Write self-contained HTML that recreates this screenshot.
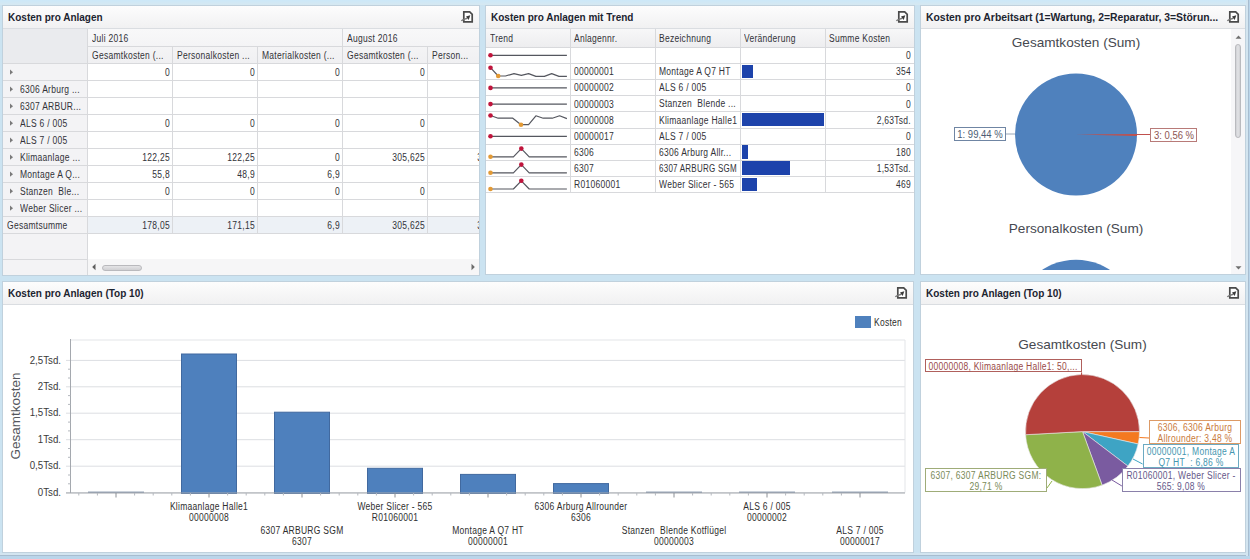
<!DOCTYPE html>
<html><head><meta charset="utf-8">
<style>
*{margin:0;padding:0;box-sizing:border-box}
html,body{width:1250px;height:559px;overflow:hidden}
body{position:relative;background:#cbe3f1;font-family:"Liberation Sans",sans-serif;font-size:10px;color:#323238}
.a{position:absolute}
.panel{position:absolute;background:#fff;overflow:hidden}
.frame{position:absolute;left:0;top:0;right:0;bottom:0;border:1px solid #c0d1dd;pointer-events:none}
.hdr{position:absolute;left:0;top:0;right:0;height:24px;background:linear-gradient(#fdfdfd,#f1f1f2);border-bottom:1px solid #dadde1}
.title{position:absolute;left:6px;top:6.5px;font-size:10px;font-weight:bold;color:#1c2430;line-height:12px;white-space:nowrap}
.ico{position:absolute;top:5px;width:14px;height:14px}
.t{position:absolute;white-space:nowrap}
svg{position:absolute;overflow:visible}
</style></head><body>
<div class="a" style="left:0;top:0;width:1250px;height:5px;background:linear-gradient(#cce8f8,#d6e8f1)"></div>
<div class="a" style="left:0;top:553px;width:1250px;height:6px;background:#bad5ea"></div>
<div class="a" style="left:0;top:553px;width:1249px;height:3px;background:#d3e5f0;border-bottom:1px solid #a8bdd0"></div>
<div class="a" style="left:1246px;top:0;width:4px;height:559px;background:#bad5ea"></div>
<div class="a" style="left:1246px;top:0;width:3px;height:556px;background:#d3e5f0;border-right:1px solid #a8bdd0"></div>

<div class="panel" id="p1" style="left:2px;top:5px;width:478px;height:271px">
<div class="hdr"><div class="title" style="">Kosten pro Anlagen</div><svg class="ico" style="left:458px" viewBox="0 0 14 14"><path d="M3.8 1.8H9.7L12.2 4.3V11.9H3.8Z" fill="#fff" stroke="#4a4a4a" stroke-width="1.7" stroke-linejoin="miter"/><path d="M1.3 10.8C2.8 9.6 4.5 8.9 7.4 8.2" fill="none" stroke="#777" stroke-width="1.4"/><path d="M10.3 5.2L6.0 6.6L8.7 9.9Z" fill="#3a3a3a"/></svg></div>
<div class="a" style="left:1px;top:24px;width:84px;height:34px;background:#eaebee"></div>
<div class="a" style="left:85px;top:24px;width:500px;height:34px;background:linear-gradient(#f8f8f9,#f0f0f2)"></div>
<div class="a" style="left:85px;top:41px;width:500px;height:1px;background:#d8d9dc"></div>
<div class="a" style="left:1px;top:58px;width:600px;height:1px;background:#d8d9dc"></div>
<div class="a" style="left:340px;top:24px;width:1px;height:17px;background:#d8d9dc"></div>
<div class="a" style="left:170px;top:41px;width:1px;height:17px;background:#d8d9dc"></div>
<div class="a" style="left:255px;top:41px;width:1px;height:17px;background:#d8d9dc"></div>
<div class="a" style="left:340px;top:41px;width:1px;height:17px;background:#d8d9dc"></div>
<div class="a" style="left:425px;top:41px;width:1px;height:17px;background:#d8d9dc"></div>
<div class="t" style="top:26.83px;font-size:10px;line-height:13px;letter-spacing:0.32px;left:90.00px;transform:scaleX(0.85);transform-origin:0 50%;">Juli 2016</div>
<div class="t" style="top:26.83px;font-size:10px;line-height:13px;letter-spacing:0.32px;left:345.00px;transform:scaleX(0.85);transform-origin:0 50%;">August 2016</div>
<div class="t" style="top:43.83px;font-size:10px;line-height:13px;letter-spacing:0.32px;left:89.50px;transform:scaleX(0.85);transform-origin:0 50%;">Gesamtkosten (...</div>
<div class="t" style="top:43.83px;font-size:10px;line-height:13px;letter-spacing:0.32px;left:174.50px;transform:scaleX(0.85);transform-origin:0 50%;">Personalkosten ...</div>
<div class="t" style="top:43.83px;font-size:10px;line-height:13px;letter-spacing:0.32px;left:259.50px;transform:scaleX(0.85);transform-origin:0 50%;">Materialkosten (...</div>
<div class="t" style="top:43.83px;font-size:10px;line-height:13px;letter-spacing:0.32px;left:344.50px;transform:scaleX(0.85);transform-origin:0 50%;">Gesamtkosten (...</div>
<div class="t" style="top:43.83px;font-size:10px;line-height:13px;letter-spacing:0.32px;left:429.50px;transform:scaleX(0.85);transform-origin:0 50%;">Person...</div>
<div class="a" style="left:1px;top:59px;width:84px;height:196px;background:#f3f3f5"></div>
<div class="a" style="left:85px;top:24px;width:1px;height:247px;background:#d8d9dc"></div>
<div class="a" style="left:1px;top:75px;width:600px;height:1px;background:#d8d9dc"></div>
<svg style="left:6.5px;top:64px" width="5" height="7"><path d="M1 0.6L4 3.2L1 5.8Z" fill="#7a7a7a"/></svg>
<div class="t" style="top:61.33px;font-size:10px;line-height:13px;letter-spacing:0.32px;left:18.00px;transform:scaleX(0.85);transform-origin:0 50%;"></div>
<div class="t" style="top:61.33px;font-size:10px;line-height:13px;letter-spacing:0.32px;left:-132.30px;width:300px;text-align:right;transform:scaleX(0.85);transform-origin:100% 50%;">0</div>
<div class="t" style="top:61.33px;font-size:10px;line-height:13px;letter-spacing:0.32px;left:-47.30px;width:300px;text-align:right;transform:scaleX(0.85);transform-origin:100% 50%;">0</div>
<div class="t" style="top:61.33px;font-size:10px;line-height:13px;letter-spacing:0.32px;left:37.70px;width:300px;text-align:right;transform:scaleX(0.85);transform-origin:100% 50%;">0</div>
<div class="t" style="top:61.33px;font-size:10px;line-height:13px;letter-spacing:0.32px;left:122.70px;width:300px;text-align:right;transform:scaleX(0.85);transform-origin:100% 50%;">0</div>
<div class="a" style="left:170px;top:58px;width:1px;height:17px;background:#d8d9dc"></div>
<div class="a" style="left:255px;top:58px;width:1px;height:17px;background:#d8d9dc"></div>
<div class="a" style="left:340px;top:58px;width:1px;height:17px;background:#d8d9dc"></div>
<div class="a" style="left:425px;top:58px;width:1px;height:17px;background:#d8d9dc"></div>
<div class="a" style="left:1px;top:92px;width:600px;height:1px;background:#d8d9dc"></div>
<svg style="left:6.5px;top:81px" width="5" height="7"><path d="M1 0.6L4 3.2L1 5.8Z" fill="#7a7a7a"/></svg>
<div class="t" style="top:78.33px;font-size:10px;line-height:13px;letter-spacing:0.32px;left:18.00px;transform:scaleX(0.85);transform-origin:0 50%;">6306 Arburg ...</div>
<div class="a" style="left:170px;top:75px;width:1px;height:17px;background:#d8d9dc"></div>
<div class="a" style="left:255px;top:75px;width:1px;height:17px;background:#d8d9dc"></div>
<div class="a" style="left:340px;top:75px;width:1px;height:17px;background:#d8d9dc"></div>
<div class="a" style="left:425px;top:75px;width:1px;height:17px;background:#d8d9dc"></div>
<div class="a" style="left:1px;top:109px;width:600px;height:1px;background:#d8d9dc"></div>
<svg style="left:6.5px;top:98px" width="5" height="7"><path d="M1 0.6L4 3.2L1 5.8Z" fill="#7a7a7a"/></svg>
<div class="t" style="top:95.33px;font-size:10px;line-height:13px;letter-spacing:0.32px;left:18.00px;transform:scaleX(0.85);transform-origin:0 50%;">6307 ARBUR...</div>
<div class="a" style="left:170px;top:92px;width:1px;height:17px;background:#d8d9dc"></div>
<div class="a" style="left:255px;top:92px;width:1px;height:17px;background:#d8d9dc"></div>
<div class="a" style="left:340px;top:92px;width:1px;height:17px;background:#d8d9dc"></div>
<div class="a" style="left:425px;top:92px;width:1px;height:17px;background:#d8d9dc"></div>
<div class="a" style="left:1px;top:126px;width:600px;height:1px;background:#d8d9dc"></div>
<svg style="left:6.5px;top:115px" width="5" height="7"><path d="M1 0.6L4 3.2L1 5.8Z" fill="#7a7a7a"/></svg>
<div class="t" style="top:112.33px;font-size:10px;line-height:13px;letter-spacing:0.32px;left:18.00px;transform:scaleX(0.85);transform-origin:0 50%;">ALS 6 / 005</div>
<div class="t" style="top:112.33px;font-size:10px;line-height:13px;letter-spacing:0.32px;left:-132.30px;width:300px;text-align:right;transform:scaleX(0.85);transform-origin:100% 50%;">0</div>
<div class="t" style="top:112.33px;font-size:10px;line-height:13px;letter-spacing:0.32px;left:-47.30px;width:300px;text-align:right;transform:scaleX(0.85);transform-origin:100% 50%;">0</div>
<div class="t" style="top:112.33px;font-size:10px;line-height:13px;letter-spacing:0.32px;left:37.70px;width:300px;text-align:right;transform:scaleX(0.85);transform-origin:100% 50%;">0</div>
<div class="t" style="top:112.33px;font-size:10px;line-height:13px;letter-spacing:0.32px;left:122.70px;width:300px;text-align:right;transform:scaleX(0.85);transform-origin:100% 50%;">0</div>
<div class="a" style="left:170px;top:109px;width:1px;height:17px;background:#d8d9dc"></div>
<div class="a" style="left:255px;top:109px;width:1px;height:17px;background:#d8d9dc"></div>
<div class="a" style="left:340px;top:109px;width:1px;height:17px;background:#d8d9dc"></div>
<div class="a" style="left:425px;top:109px;width:1px;height:17px;background:#d8d9dc"></div>
<div class="a" style="left:1px;top:143px;width:600px;height:1px;background:#d8d9dc"></div>
<svg style="left:6.5px;top:132px" width="5" height="7"><path d="M1 0.6L4 3.2L1 5.8Z" fill="#7a7a7a"/></svg>
<div class="t" style="top:129.34px;font-size:10px;line-height:13px;letter-spacing:0.32px;left:18.00px;transform:scaleX(0.85);transform-origin:0 50%;">ALS 7 / 005</div>
<div class="a" style="left:170px;top:126px;width:1px;height:17px;background:#d8d9dc"></div>
<div class="a" style="left:255px;top:126px;width:1px;height:17px;background:#d8d9dc"></div>
<div class="a" style="left:340px;top:126px;width:1px;height:17px;background:#d8d9dc"></div>
<div class="a" style="left:425px;top:126px;width:1px;height:17px;background:#d8d9dc"></div>
<div class="a" style="left:1px;top:160px;width:600px;height:1px;background:#d8d9dc"></div>
<svg style="left:6.5px;top:149px" width="5" height="7"><path d="M1 0.6L4 3.2L1 5.8Z" fill="#7a7a7a"/></svg>
<div class="t" style="top:146.34px;font-size:10px;line-height:13px;letter-spacing:0.32px;left:18.00px;transform:scaleX(0.85);transform-origin:0 50%;">Klimaanlage ...</div>
<div class="t" style="top:146.34px;font-size:10px;line-height:13px;letter-spacing:0.32px;left:-132.30px;width:300px;text-align:right;transform:scaleX(0.85);transform-origin:100% 50%;">122,25</div>
<div class="t" style="top:146.34px;font-size:10px;line-height:13px;letter-spacing:0.32px;left:-47.30px;width:300px;text-align:right;transform:scaleX(0.85);transform-origin:100% 50%;">122,25</div>
<div class="t" style="top:146.34px;font-size:10px;line-height:13px;letter-spacing:0.32px;left:37.70px;width:300px;text-align:right;transform:scaleX(0.85);transform-origin:100% 50%;">0</div>
<div class="t" style="top:146.34px;font-size:10px;line-height:13px;letter-spacing:0.32px;left:122.70px;width:300px;text-align:right;transform:scaleX(0.85);transform-origin:100% 50%;">305,625</div>
<div class="t" style="top:146.34px;font-size:10px;line-height:13px;letter-spacing:0.32px;left:207.70px;width:300px;text-align:right;transform:scaleX(0.85);transform-origin:100% 50%;">305,625</div>
<div class="a" style="left:170px;top:143px;width:1px;height:17px;background:#d8d9dc"></div>
<div class="a" style="left:255px;top:143px;width:1px;height:17px;background:#d8d9dc"></div>
<div class="a" style="left:340px;top:143px;width:1px;height:17px;background:#d8d9dc"></div>
<div class="a" style="left:425px;top:143px;width:1px;height:17px;background:#d8d9dc"></div>
<div class="a" style="left:1px;top:177px;width:600px;height:1px;background:#d8d9dc"></div>
<svg style="left:6.5px;top:166px" width="5" height="7"><path d="M1 0.6L4 3.2L1 5.8Z" fill="#7a7a7a"/></svg>
<div class="t" style="top:163.34px;font-size:10px;line-height:13px;letter-spacing:0.32px;left:18.00px;transform:scaleX(0.85);transform-origin:0 50%;">Montage A Q...</div>
<div class="t" style="top:163.34px;font-size:10px;line-height:13px;letter-spacing:0.32px;left:-132.30px;width:300px;text-align:right;transform:scaleX(0.85);transform-origin:100% 50%;">55,8</div>
<div class="t" style="top:163.34px;font-size:10px;line-height:13px;letter-spacing:0.32px;left:-47.30px;width:300px;text-align:right;transform:scaleX(0.85);transform-origin:100% 50%;">48,9</div>
<div class="t" style="top:163.34px;font-size:10px;line-height:13px;letter-spacing:0.32px;left:37.70px;width:300px;text-align:right;transform:scaleX(0.85);transform-origin:100% 50%;">6,9</div>
<div class="a" style="left:170px;top:160px;width:1px;height:17px;background:#d8d9dc"></div>
<div class="a" style="left:255px;top:160px;width:1px;height:17px;background:#d8d9dc"></div>
<div class="a" style="left:340px;top:160px;width:1px;height:17px;background:#d8d9dc"></div>
<div class="a" style="left:425px;top:160px;width:1px;height:17px;background:#d8d9dc"></div>
<div class="a" style="left:1px;top:194px;width:600px;height:1px;background:#d8d9dc"></div>
<svg style="left:6.5px;top:183px" width="5" height="7"><path d="M1 0.6L4 3.2L1 5.8Z" fill="#7a7a7a"/></svg>
<div class="t" style="top:180.34px;font-size:10px;line-height:13px;letter-spacing:0.32px;left:18.00px;transform:scaleX(0.85);transform-origin:0 50%;">Stanzen&nbsp; Ble...</div>
<div class="t" style="top:180.34px;font-size:10px;line-height:13px;letter-spacing:0.32px;left:-132.30px;width:300px;text-align:right;transform:scaleX(0.85);transform-origin:100% 50%;">0</div>
<div class="t" style="top:180.34px;font-size:10px;line-height:13px;letter-spacing:0.32px;left:-47.30px;width:300px;text-align:right;transform:scaleX(0.85);transform-origin:100% 50%;">0</div>
<div class="t" style="top:180.34px;font-size:10px;line-height:13px;letter-spacing:0.32px;left:37.70px;width:300px;text-align:right;transform:scaleX(0.85);transform-origin:100% 50%;">0</div>
<div class="t" style="top:180.34px;font-size:10px;line-height:13px;letter-spacing:0.32px;left:122.70px;width:300px;text-align:right;transform:scaleX(0.85);transform-origin:100% 50%;">0</div>
<div class="a" style="left:170px;top:177px;width:1px;height:17px;background:#d8d9dc"></div>
<div class="a" style="left:255px;top:177px;width:1px;height:17px;background:#d8d9dc"></div>
<div class="a" style="left:340px;top:177px;width:1px;height:17px;background:#d8d9dc"></div>
<div class="a" style="left:425px;top:177px;width:1px;height:17px;background:#d8d9dc"></div>
<div class="a" style="left:1px;top:211px;width:600px;height:1px;background:#d8d9dc"></div>
<svg style="left:6.5px;top:200px" width="5" height="7"><path d="M1 0.6L4 3.2L1 5.8Z" fill="#7a7a7a"/></svg>
<div class="t" style="top:197.34px;font-size:10px;line-height:13px;letter-spacing:0.32px;left:18.00px;transform:scaleX(0.85);transform-origin:0 50%;">Weber Slicer ...</div>
<div class="a" style="left:170px;top:194px;width:1px;height:17px;background:#d8d9dc"></div>
<div class="a" style="left:255px;top:194px;width:1px;height:17px;background:#d8d9dc"></div>
<div class="a" style="left:340px;top:194px;width:1px;height:17px;background:#d8d9dc"></div>
<div class="a" style="left:425px;top:194px;width:1px;height:17px;background:#d8d9dc"></div>
<div class="a" style="left:86px;top:212px;width:600px;height:16px;background:#edf1f6"></div>
<div class="a" style="left:1px;top:228px;width:600px;height:1px;background:#d8d9dc"></div>
<div class="t" style="top:214.34px;font-size:10px;line-height:13px;letter-spacing:0.32px;left:5.00px;transform:scaleX(0.85);transform-origin:0 50%;">Gesamtsumme</div>
<div class="t" style="top:214.34px;font-size:10px;line-height:13px;letter-spacing:0.32px;left:-132.30px;width:300px;text-align:right;transform:scaleX(0.85);transform-origin:100% 50%;">178,05</div>
<div class="t" style="top:214.34px;font-size:10px;line-height:13px;letter-spacing:0.32px;left:-47.30px;width:300px;text-align:right;transform:scaleX(0.85);transform-origin:100% 50%;">171,15</div>
<div class="t" style="top:214.34px;font-size:10px;line-height:13px;letter-spacing:0.32px;left:37.70px;width:300px;text-align:right;transform:scaleX(0.85);transform-origin:100% 50%;">6,9</div>
<div class="t" style="top:214.34px;font-size:10px;line-height:13px;letter-spacing:0.32px;left:122.70px;width:300px;text-align:right;transform:scaleX(0.85);transform-origin:100% 50%;">305,625</div>
<div class="t" style="top:214.34px;font-size:10px;line-height:13px;letter-spacing:0.32px;left:207.70px;width:300px;text-align:right;transform:scaleX(0.85);transform-origin:100% 50%;">305,625</div>
<div class="a" style="left:170px;top:211px;width:1px;height:17px;background:#d8d9dc"></div>
<div class="a" style="left:255px;top:211px;width:1px;height:17px;background:#d8d9dc"></div>
<div class="a" style="left:340px;top:211px;width:1px;height:17px;background:#d8d9dc"></div>
<div class="a" style="left:425px;top:211px;width:1px;height:17px;background:#d8d9dc"></div>
<div class="a" style="left:1px;top:255px;width:84px;height:16px;background:#f3f3f5"></div>
<div class="a" style="left:1px;top:254px;width:84px;height:1px;background:#d8d9dc"></div>
<div class="a" style="left:86px;top:254px;width:400px;height:17px;background:#f6f6f7"></div>
<svg style="left:89px;top:258px" width="6" height="8"><path d="M4.5 0.8L1.2 4L4.5 7.2Z" fill="#5e5e5e"/></svg>
<div class="a" style="left:100px;top:259.5px;width:40px;height:6px;background:linear-gradient(#e4e4e6,#d0d0d3);border:1px solid #b9b9bd;border-radius:3px"></div>
<svg style="left:468px;top:258px" width="6" height="8"><path d="M1.5 0.8L4.8 4L1.5 7.2Z" fill="#6b6b6b"/></svg>
<div class="frame"></div></div>
<div class="panel" id="p2" style="left:485px;top:5px;width:430px;height:270px">
<div class="hdr"><div class="title" style="">Kosten pro Anlagen mit Trend</div><svg class="ico" style="left:410px" viewBox="0 0 14 14"><path d="M3.8 1.8H9.7L12.2 4.3V11.9H3.8Z" fill="#fff" stroke="#4a4a4a" stroke-width="1.7" stroke-linejoin="miter"/><path d="M1.3 10.8C2.8 9.6 4.5 8.9 7.4 8.2" fill="none" stroke="#777" stroke-width="1.4"/><path d="M10.3 5.2L6.0 6.6L8.7 9.9Z" fill="#3a3a3a"/></svg></div>
<div class="a" style="left:1px;top:24px;width:428px;height:19px;background:linear-gradient(#f7f7f8,#ededef)"></div>
<div class="a" style="left:85px;top:24px;width:1px;height:163px;background:#d8d9dc"></div>
<div class="a" style="left:170px;top:24px;width:1px;height:163px;background:#d8d9dc"></div>
<div class="a" style="left:255px;top:24px;width:1px;height:163px;background:#d8d9dc"></div>
<div class="a" style="left:340px;top:24px;width:1px;height:163px;background:#d8d9dc"></div>
<div class="a" style="left:1px;top:42px;width:428px;height:1px;background:#d8d9dc"></div>
<div class="a" style="left:1px;top:58px;width:428px;height:1px;background:#d8d9dc"></div>
<div class="a" style="left:1px;top:74px;width:428px;height:1px;background:#d8d9dc"></div>
<div class="a" style="left:1px;top:90px;width:428px;height:1px;background:#d8d9dc"></div>
<div class="a" style="left:1px;top:106px;width:428px;height:1px;background:#d8d9dc"></div>
<div class="a" style="left:1px;top:123px;width:428px;height:1px;background:#d8d9dc"></div>
<div class="a" style="left:1px;top:139px;width:428px;height:1px;background:#d8d9dc"></div>
<div class="a" style="left:1px;top:155px;width:428px;height:1px;background:#d8d9dc"></div>
<div class="a" style="left:1px;top:171px;width:428px;height:1px;background:#d8d9dc"></div>
<div class="a" style="left:1px;top:187px;width:428px;height:1px;background:#d8d9dc"></div>
<div class="t" style="top:26.74px;font-size:10px;line-height:13px;letter-spacing:0.32px;left:4.50px;transform:scaleX(0.85);transform-origin:0 50%;">Trend</div>
<div class="t" style="top:26.74px;font-size:10px;line-height:13px;letter-spacing:0.32px;left:88.50px;transform:scaleX(0.85);transform-origin:0 50%;">Anlagennr.</div>
<div class="t" style="top:26.74px;font-size:10px;line-height:13px;letter-spacing:0.32px;left:173.50px;transform:scaleX(0.85);transform-origin:0 50%;">Bezeichnung</div>
<div class="t" style="top:26.74px;font-size:10px;line-height:13px;letter-spacing:0.32px;left:258.50px;transform:scaleX(0.85);transform-origin:0 50%;">Ver&auml;nderung</div>
<div class="t" style="top:26.74px;font-size:10px;line-height:13px;letter-spacing:0.32px;left:343.50px;transform:scaleX(0.85);transform-origin:0 50%;">Summe Kosten</div>
<div class="t" style="top:44.23px;font-size:10px;line-height:13px;letter-spacing:0.32px;left:125.80px;width:300px;text-align:right;transform:scaleX(0.85);transform-origin:100% 50%;">0</div>
<div class="t" style="top:60.32px;font-size:10px;line-height:13px;letter-spacing:0.32px;left:89.00px;transform:scaleX(0.85);transform-origin:0 50%;">00000001</div>
<div class="a" style="left:170px;top:58.19px;width:84px;height:16px;overflow:hidden"><div class="t" style="top:2.13px;font-size:10px;line-height:13px;letter-spacing:0.32px;left:4.00px;transform:scaleX(0.85);transform-origin:0 50%;">Montage A Q7 HT</div></div>
<div class="a" style="left:257px;top:59.89px;width:11px;height:13.3px;background:#1d43ab"></div>
<div class="t" style="top:60.32px;font-size:10px;line-height:13px;letter-spacing:0.32px;left:125.80px;width:300px;text-align:right;transform:scaleX(0.85);transform-origin:100% 50%;">354</div>
<div class="t" style="top:76.41px;font-size:10px;line-height:13px;letter-spacing:0.32px;left:89.00px;transform:scaleX(0.85);transform-origin:0 50%;">00000002</div>
<div class="a" style="left:170px;top:74.28px;width:84px;height:16px;overflow:hidden"><div class="t" style="top:2.13px;font-size:10px;line-height:13px;letter-spacing:0.32px;left:4.00px;transform:scaleX(0.85);transform-origin:0 50%;">ALS 6 / 005</div></div>
<div class="t" style="top:76.41px;font-size:10px;line-height:13px;letter-spacing:0.32px;left:125.80px;width:300px;text-align:right;transform:scaleX(0.85);transform-origin:100% 50%;">0</div>
<div class="t" style="top:92.50px;font-size:10px;line-height:13px;letter-spacing:0.32px;left:89.00px;transform:scaleX(0.85);transform-origin:0 50%;">00000003</div>
<div class="a" style="left:170px;top:90.37px;width:84px;height:16px;overflow:hidden"><div class="t" style="top:2.13px;font-size:10px;line-height:13px;letter-spacing:0.32px;left:4.00px;transform:scaleX(0.85);transform-origin:0 50%;">Stanzen&nbsp; Blende ...</div></div>
<div class="t" style="top:92.50px;font-size:10px;line-height:13px;letter-spacing:0.32px;left:125.80px;width:300px;text-align:right;transform:scaleX(0.85);transform-origin:100% 50%;">0</div>
<div class="t" style="top:108.59px;font-size:10px;line-height:13px;letter-spacing:0.32px;left:89.00px;transform:scaleX(0.85);transform-origin:0 50%;">00000008</div>
<div class="a" style="left:170px;top:106.46000000000001px;width:84px;height:16px;overflow:hidden"><div class="t" style="top:2.13px;font-size:10px;line-height:13px;letter-spacing:0.32px;left:4.00px;transform:scaleX(0.85);transform-origin:0 50%;">Klimaanlage Halle1</div></div>
<div class="a" style="left:257px;top:108.16000000000001px;width:82px;height:13.3px;background:#1d43ab"></div>
<div class="t" style="top:108.59px;font-size:10px;line-height:13px;letter-spacing:0.32px;left:125.80px;width:300px;text-align:right;transform:scaleX(0.85);transform-origin:100% 50%;">2,63Tsd.</div>
<div class="t" style="top:124.69px;font-size:10px;line-height:13px;letter-spacing:0.32px;left:89.00px;transform:scaleX(0.85);transform-origin:0 50%;">00000017</div>
<div class="a" style="left:170px;top:122.55000000000001px;width:84px;height:16px;overflow:hidden"><div class="t" style="top:2.13px;font-size:10px;line-height:13px;letter-spacing:0.32px;left:4.00px;transform:scaleX(0.85);transform-origin:0 50%;">ALS 7 / 005</div></div>
<div class="t" style="top:124.69px;font-size:10px;line-height:13px;letter-spacing:0.32px;left:125.80px;width:300px;text-align:right;transform:scaleX(0.85);transform-origin:100% 50%;">0</div>
<div class="t" style="top:140.77px;font-size:10px;line-height:13px;letter-spacing:0.32px;left:89.00px;transform:scaleX(0.85);transform-origin:0 50%;">6306</div>
<div class="a" style="left:170px;top:138.64px;width:84px;height:16px;overflow:hidden"><div class="t" style="top:2.13px;font-size:10px;line-height:13px;letter-spacing:0.32px;left:4.00px;transform:scaleX(0.85);transform-origin:0 50%;">6306 Arburg Allr...</div></div>
<div class="a" style="left:257px;top:140.33999999999997px;width:5.5px;height:13.3px;background:#1d43ab"></div>
<div class="t" style="top:140.77px;font-size:10px;line-height:13px;letter-spacing:0.32px;left:125.80px;width:300px;text-align:right;transform:scaleX(0.85);transform-origin:100% 50%;">180</div>
<div class="t" style="top:156.86px;font-size:10px;line-height:13px;letter-spacing:0.32px;left:89.00px;transform:scaleX(0.85);transform-origin:0 50%;">6307</div>
<div class="a" style="left:170px;top:154.73px;width:84px;height:16px;overflow:hidden"><div class="t" style="top:2.13px;font-size:10px;line-height:13px;left:4.00px;transform:scaleX(0.8);transform-origin:0 50%;letter-spacing:0.3px;">6307 ARBURG SGM</div></div>
<div class="a" style="left:257px;top:156.42999999999998px;width:48px;height:13.3px;background:#1d43ab"></div>
<div class="t" style="top:156.86px;font-size:10px;line-height:13px;letter-spacing:0.32px;left:125.80px;width:300px;text-align:right;transform:scaleX(0.85);transform-origin:100% 50%;">1,53Tsd.</div>
<div class="t" style="top:172.95px;font-size:10px;line-height:13px;letter-spacing:0.32px;left:89.00px;transform:scaleX(0.85);transform-origin:0 50%;">R01060001</div>
<div class="a" style="left:170px;top:170.82px;width:84px;height:16px;overflow:hidden"><div class="t" style="top:2.13px;font-size:10px;line-height:13px;letter-spacing:0.32px;left:4.00px;transform:scaleX(0.85);transform-origin:0 50%;">Weber Slicer - 565</div></div>
<div class="a" style="left:257px;top:172.51999999999998px;width:14.5px;height:13.3px;background:#1d43ab"></div>
<div class="t" style="top:172.95px;font-size:10px;line-height:13px;letter-spacing:0.32px;left:125.80px;width:300px;text-align:right;transform:scaleX(0.85);transform-origin:100% 50%;">469</div>
<svg style="left:0;top:0" width="429" height="270"><path d="M5.5 50.3 L81.9 50.3" fill="none" stroke="#55575f" stroke-width="1.2" stroke-linejoin="round"/><circle cx="5.5" cy="50.3" r="2.3" fill="#c0143c"/><path d="M5.5 62.7 L13.2 71.0 L20.5 71.0 L29.0 68.6 L36.3 70.4 L43.6 68.6 L50.9 71.4 L59.4 71.4 L66.7 68.6 L74.0 71.4 L81.9 71.4" fill="none" stroke="#55575f" stroke-width="1.2" stroke-linejoin="round"/><circle cx="5.5" cy="62.7" r="2.3" fill="#c0143c"/><circle cx="13.2" cy="71.0" r="2.3" fill="#e39a35"/><path d="M5.5 82.9 L81.9 82.9" fill="none" stroke="#55575f" stroke-width="1.2" stroke-linejoin="round"/><circle cx="5.5" cy="82.9" r="2.3" fill="#c0143c"/><path d="M5.5 99.1 L81.9 99.1" fill="none" stroke="#55575f" stroke-width="1.2" stroke-linejoin="round"/><circle cx="5.5" cy="99.1" r="2.3" fill="#c0143c"/><path d="M5.5 110.5 L13.2 113.2 L27.8 113.2 L36.0 119.7 L43.6 119.7 L50.9 110.8 L58.2 113.2 L67.3 113.2 L74.6 110.8 L81.9 113.6" fill="none" stroke="#55575f" stroke-width="1.2" stroke-linejoin="round"/><circle cx="5.5" cy="110.5" r="2.3" fill="#c0143c"/><circle cx="36.0" cy="119.7" r="2.3" fill="#e39a35"/><path d="M5.5 131.3 L81.9 131.3" fill="none" stroke="#55575f" stroke-width="1.2" stroke-linejoin="round"/><circle cx="5.5" cy="131.3" r="2.3" fill="#c0143c"/><path d="M5.5 151.8 L28.4 151.8 L36.3 143.6 L44.2 151.8 L81.9 151.8" fill="none" stroke="#55575f" stroke-width="1.2" stroke-linejoin="round"/><circle cx="5.5" cy="151.8" r="2.3" fill="#e39a35"/><circle cx="36.3" cy="143.6" r="2.3" fill="#c0143c"/><path d="M5.5 167.8 L28.4 167.8 L36.3 159.6 L44.2 167.8 L81.9 167.8" fill="none" stroke="#55575f" stroke-width="1.2" stroke-linejoin="round"/><circle cx="5.5" cy="167.8" r="2.3" fill="#e39a35"/><circle cx="36.3" cy="159.6" r="2.3" fill="#c0143c"/><path d="M5.5 184.0 L28.4 184.0 L36.3 175.8 L44.2 184.0 L81.9 184.0" fill="none" stroke="#55575f" stroke-width="1.2" stroke-linejoin="round"/><circle cx="5.5" cy="184.0" r="2.3" fill="#e39a35"/><circle cx="36.3" cy="175.8" r="2.3" fill="#c0143c"/></svg>
<div class="frame"></div></div>
<div class="panel" id="p3" style="left:920px;top:5px;width:326px;height:270px">
<div class="hdr"><div class="title" style="font-size:10.4px">Kosten pro Arbeitsart (1=Wartung, 2=Reparatur, 3=St&ouml;run...</div><svg class="ico" style="left:306px" viewBox="0 0 14 14"><path d="M3.8 1.8H9.7L12.2 4.3V11.9H3.8Z" fill="#fff" stroke="#4a4a4a" stroke-width="1.7" stroke-linejoin="miter"/><path d="M1.3 10.8C2.8 9.6 4.5 8.9 7.4 8.2" fill="none" stroke="#777" stroke-width="1.4"/><path d="M10.3 5.2L6.0 6.6L8.7 9.9Z" fill="#3a3a3a"/></svg></div>
<div class="t" style="top:28.99px;font-size:13.6px;line-height:18px;color:#464950;left:6.00px;width:300px;text-align:center;transform:scaleX(1);transform-origin:50% 50%;">Gesamtkosten (Sum)</div>
<div class="t" style="top:215.29px;font-size:13.6px;line-height:18px;color:#464950;left:6.00px;width:300px;text-align:center;transform:scaleX(1);transform-origin:50% 50%;">Personalkosten (Sum)</div>
<svg style="left:0;top:0" width="326" height="270"><circle cx="156" cy="129.6" r="61" fill="#4f81bd"/><path d="M156 129.6 L217.00 128.96 A61 61 0 0 1 216.98 131.09Z" fill="#c0504d"/><circle cx="156" cy="315.7" r="61" fill="#4f81bd"/><path d="M85.79999999999995 129 H95" stroke="#98a6b6" stroke-width="1"/><path d="M217 129.5 H230.5" stroke="#c0504d" stroke-width="1"/></svg>
<div class="a" style="left:34px;top:122px;width:52px;height:14px;border:1px solid #6f85a3;background:#fff"></div>
<div class="t" style="top:122.63px;font-size:10px;line-height:13px;color:#4b5c74;left:-90.00px;width:300px;text-align:center;transform:scaleX(0.95);transform-origin:50% 50%;">1: 99,44 %</div>
<div class="a" style="left:230px;top:123px;width:47px;height:14px;border:1px solid #b87a78;background:#fff"></div>
<div class="t" style="top:123.63px;font-size:10px;line-height:13px;color:#8e5552;left:103.50px;width:300px;text-align:center;transform:scaleX(0.95);transform-origin:50% 50%;">3: 0,56 %</div>
<div class="a" style="left:1px;top:265px;width:310px;height:6px;background:#fff"></div>
<div class="a" style="left:311px;top:24px;width:14px;height:246px;background:#f6f6f8"></div>
<svg style="left:315px;top:30px" width="7" height="4"><path d="M0.5 3.8L3.5 0.6L6.5 3.8Z" fill="#707070"/></svg>
<div class="a" style="left:315px;top:38.7px;width:6px;height:94px;background:linear-gradient(90deg,#cfd0d4,#e2e3e6,#cfd0d4);border:1px solid #b9babe;border-radius:3px"></div>
<svg style="left:315px;top:261px" width="7" height="4"><path d="M0.5 0.2L3.5 3.4L6.5 0.2Z" fill="#707070"/></svg>
<div class="frame"></div></div>
<div class="panel" id="p4" style="left:2px;top:281px;width:912px;height:272px">
<div class="hdr"><div class="title" style="">Kosten pro Anlagen (Top 10)</div><svg class="ico" style="left:892px" viewBox="0 0 14 14"><path d="M3.8 1.8H9.7L12.2 4.3V11.9H3.8Z" fill="#fff" stroke="#4a4a4a" stroke-width="1.7" stroke-linejoin="miter"/><path d="M1.3 10.8C2.8 9.6 4.5 8.9 7.4 8.2" fill="none" stroke="#777" stroke-width="1.4"/><path d="M10.3 5.2L6.0 6.6L8.7 9.9Z" fill="#3a3a3a"/></svg></div>
<svg style="left:0;top:0" width="912" height="272"><path d="M64 211.6 H903" stroke="#dcdee2" stroke-width="1"/><path d="M64 185.2 H903" stroke="#dcdee2" stroke-width="1"/><path d="M64 158.7 H903" stroke="#dcdee2" stroke-width="1"/><path d="M64 132.2 H903" stroke="#dcdee2" stroke-width="1"/><path d="M64 105.8 H903" stroke="#dcdee2" stroke-width="1"/><path d="M64 79.4 H903" stroke="#dcdee2" stroke-width="1"/><path d="M68.5 59.0 H903 V211.60000000000002" fill="none" stroke="#e3e5e8" stroke-width="1"/><rect x="86" y="210.6" width="56" height="1.2" fill="#7d8ea5"/><rect x="179.5" y="73.0" width="55" height="139.5" fill="#4e80bd" stroke="#41699f" stroke-width="1"/><rect x="272.5" y="131.2" width="55" height="81.3" fill="#4e80bd" stroke="#41699f" stroke-width="1"/><rect x="365.5" y="187.3" width="55" height="25.2" fill="#4e80bd" stroke="#41699f" stroke-width="1"/><rect x="458.5" y="193.4" width="55" height="19.1" fill="#4e80bd" stroke="#41699f" stroke-width="1"/><rect x="551.5" y="202.6" width="55" height="9.9" fill="#4e80bd" stroke="#41699f" stroke-width="1"/><rect x="644" y="210.6" width="56" height="1.2" fill="#7d8ea5"/><rect x="737" y="210.6" width="56" height="1.2" fill="#7d8ea5"/><rect x="830" y="210.6" width="56" height="1.2" fill="#7d8ea5"/><path d="M64 212.0 H903" stroke="#a4a8ae" stroke-width="1"/><path d="M68.5 58 V212" stroke="#a4a8ae" stroke-width="1"/><path d="M76.8 212 V214.5" stroke="#b4b8be" stroke-width="1"/><path d="M95.4 212 V214.5" stroke="#b4b8be" stroke-width="1"/><path d="M114.0 212 V216.5" stroke="#8c9096" stroke-width="1"/><path d="M132.6 212 V214.5" stroke="#b4b8be" stroke-width="1"/><path d="M151.2 212 V214.5" stroke="#b4b8be" stroke-width="1"/><path d="M169.8 212 V214.5" stroke="#b4b8be" stroke-width="1"/><path d="M188.4 212 V214.5" stroke="#b4b8be" stroke-width="1"/><path d="M207.0 212 V216.5" stroke="#8c9096" stroke-width="1"/><path d="M225.6 212 V214.5" stroke="#b4b8be" stroke-width="1"/><path d="M244.2 212 V214.5" stroke="#b4b8be" stroke-width="1"/><path d="M262.8 212 V214.5" stroke="#b4b8be" stroke-width="1"/><path d="M281.4 212 V214.5" stroke="#b4b8be" stroke-width="1"/><path d="M300.0 212 V216.5" stroke="#8c9096" stroke-width="1"/><path d="M318.6 212 V214.5" stroke="#b4b8be" stroke-width="1"/><path d="M337.2 212 V214.5" stroke="#b4b8be" stroke-width="1"/><path d="M355.8 212 V214.5" stroke="#b4b8be" stroke-width="1"/><path d="M374.4 212 V214.5" stroke="#b4b8be" stroke-width="1"/><path d="M393.0 212 V216.5" stroke="#8c9096" stroke-width="1"/><path d="M411.6 212 V214.5" stroke="#b4b8be" stroke-width="1"/><path d="M430.2 212 V214.5" stroke="#b4b8be" stroke-width="1"/><path d="M448.8 212 V214.5" stroke="#b4b8be" stroke-width="1"/><path d="M467.4 212 V214.5" stroke="#b4b8be" stroke-width="1"/><path d="M486.0 212 V216.5" stroke="#8c9096" stroke-width="1"/><path d="M504.6 212 V214.5" stroke="#b4b8be" stroke-width="1"/><path d="M523.2 212 V214.5" stroke="#b4b8be" stroke-width="1"/><path d="M541.8 212 V214.5" stroke="#b4b8be" stroke-width="1"/><path d="M560.4 212 V214.5" stroke="#b4b8be" stroke-width="1"/><path d="M579.0 212 V216.5" stroke="#8c9096" stroke-width="1"/><path d="M597.6 212 V214.5" stroke="#b4b8be" stroke-width="1"/><path d="M616.2 212 V214.5" stroke="#b4b8be" stroke-width="1"/><path d="M634.8 212 V214.5" stroke="#b4b8be" stroke-width="1"/><path d="M653.4 212 V214.5" stroke="#b4b8be" stroke-width="1"/><path d="M672.0 212 V216.5" stroke="#8c9096" stroke-width="1"/><path d="M690.6 212 V214.5" stroke="#b4b8be" stroke-width="1"/><path d="M709.2 212 V214.5" stroke="#b4b8be" stroke-width="1"/><path d="M727.8 212 V214.5" stroke="#b4b8be" stroke-width="1"/><path d="M746.4 212 V214.5" stroke="#b4b8be" stroke-width="1"/><path d="M765.0 212 V216.5" stroke="#8c9096" stroke-width="1"/><path d="M783.6 212 V214.5" stroke="#b4b8be" stroke-width="1"/><path d="M802.2 212 V214.5" stroke="#b4b8be" stroke-width="1"/><path d="M820.8 212 V214.5" stroke="#b4b8be" stroke-width="1"/><path d="M839.4 212 V214.5" stroke="#b4b8be" stroke-width="1"/><path d="M858.0 212 V216.5" stroke="#8c9096" stroke-width="1"/><path d="M66 202.8 H68.5" stroke="#b4b8be" stroke-width="1"/><path d="M66 194.0 H68.5" stroke="#b4b8be" stroke-width="1"/><path d="M66 176.3 H68.5" stroke="#b4b8be" stroke-width="1"/><path d="M66 167.5 H68.5" stroke="#b4b8be" stroke-width="1"/><path d="M66 149.9 H68.5" stroke="#b4b8be" stroke-width="1"/><path d="M66 141.1 H68.5" stroke="#b4b8be" stroke-width="1"/><path d="M66 123.4 H68.5" stroke="#b4b8be" stroke-width="1"/><path d="M66 114.6 H68.5" stroke="#b4b8be" stroke-width="1"/><path d="M66 97.0 H68.5" stroke="#b4b8be" stroke-width="1"/><path d="M66 88.2 H68.5" stroke="#b4b8be" stroke-width="1"/></svg>
<div class="t" style="top:204.84px;font-size:10px;line-height:13px;color:#3a3a3a;left:-241.50px;width:300px;text-align:right;transform:scaleX(0.97);transform-origin:100% 50%;">0Tsd.</div>
<div class="t" style="top:178.39px;font-size:10px;line-height:13px;color:#3a3a3a;left:-241.50px;width:300px;text-align:right;transform:scaleX(0.97);transform-origin:100% 50%;">0,5Tsd.</div>
<div class="t" style="top:151.94px;font-size:10px;line-height:13px;color:#3a3a3a;left:-241.50px;width:300px;text-align:right;transform:scaleX(0.97);transform-origin:100% 50%;">1Tsd.</div>
<div class="t" style="top:125.48px;font-size:10px;line-height:13px;color:#3a3a3a;left:-241.50px;width:300px;text-align:right;transform:scaleX(0.97);transform-origin:100% 50%;">1,5Tsd.</div>
<div class="t" style="top:99.03px;font-size:10px;line-height:13px;color:#3a3a3a;left:-241.50px;width:300px;text-align:right;transform:scaleX(0.97);transform-origin:100% 50%;">2Tsd.</div>
<div class="t" style="top:72.59px;font-size:10px;line-height:13px;color:#3a3a3a;left:-241.50px;width:300px;text-align:right;transform:scaleX(0.97);transform-origin:100% 50%;">2,5Tsd.</div>
<div class="t" style="top:127.00px;left:-46px;width:120px;text-align:center;font-size:13.5px;line-height:16px;color:#54575d;transform:rotate(-90deg)">Gesamtkosten</div>
<div class="t" style="top:219.03px;font-size:10px;line-height:13px;letter-spacing:0.32px;color:#2e2e2e;left:57.00px;width:300px;text-align:center;transform:scaleX(0.85);transform-origin:50% 50%;">Klimaanlage Halle1</div>
<div class="t" style="top:230.24px;font-size:10px;line-height:13px;letter-spacing:0.32px;color:#2e2e2e;left:57.00px;width:300px;text-align:center;transform:scaleX(0.85);transform-origin:50% 50%;">00000008</div>
<div class="t" style="top:242.64px;font-size:10px;line-height:13px;letter-spacing:0.32px;color:#2e2e2e;left:150.00px;width:300px;text-align:center;transform:scaleX(0.85);transform-origin:50% 50%;">6307 ARBURG SGM</div>
<div class="t" style="top:253.84px;font-size:10px;line-height:13px;letter-spacing:0.32px;color:#2e2e2e;left:150.00px;width:300px;text-align:center;transform:scaleX(0.85);transform-origin:50% 50%;">6307</div>
<div class="t" style="top:219.03px;font-size:10px;line-height:13px;letter-spacing:0.32px;color:#2e2e2e;left:243.00px;width:300px;text-align:center;transform:scaleX(0.85);transform-origin:50% 50%;">Weber Slicer - 565</div>
<div class="t" style="top:230.24px;font-size:10px;line-height:13px;letter-spacing:0.32px;color:#2e2e2e;left:243.00px;width:300px;text-align:center;transform:scaleX(0.85);transform-origin:50% 50%;">R01060001</div>
<div class="t" style="top:242.64px;font-size:10px;line-height:13px;letter-spacing:0.32px;color:#2e2e2e;left:336.00px;width:300px;text-align:center;transform:scaleX(0.85);transform-origin:50% 50%;">Montage A Q7 HT</div>
<div class="t" style="top:253.84px;font-size:10px;line-height:13px;letter-spacing:0.32px;color:#2e2e2e;left:336.00px;width:300px;text-align:center;transform:scaleX(0.85);transform-origin:50% 50%;">00000001</div>
<div class="t" style="top:219.03px;font-size:10px;line-height:13px;letter-spacing:0.32px;color:#2e2e2e;left:429.00px;width:300px;text-align:center;transform:scaleX(0.85);transform-origin:50% 50%;">6306 Arburg Allrounder</div>
<div class="t" style="top:230.24px;font-size:10px;line-height:13px;letter-spacing:0.32px;color:#2e2e2e;left:429.00px;width:300px;text-align:center;transform:scaleX(0.85);transform-origin:50% 50%;">6306</div>
<div class="t" style="top:242.64px;font-size:10px;line-height:13px;letter-spacing:0.32px;color:#2e2e2e;left:522.00px;width:300px;text-align:center;transform:scaleX(0.85);transform-origin:50% 50%;">Stanzen&nbsp; Blende Kotfl&uuml;gel</div>
<div class="t" style="top:253.84px;font-size:10px;line-height:13px;letter-spacing:0.32px;color:#2e2e2e;left:522.00px;width:300px;text-align:center;transform:scaleX(0.85);transform-origin:50% 50%;">00000003</div>
<div class="t" style="top:219.03px;font-size:10px;line-height:13px;letter-spacing:0.32px;color:#2e2e2e;left:615.00px;width:300px;text-align:center;transform:scaleX(0.85);transform-origin:50% 50%;">ALS 6 / 005</div>
<div class="t" style="top:230.24px;font-size:10px;line-height:13px;letter-spacing:0.32px;color:#2e2e2e;left:615.00px;width:300px;text-align:center;transform:scaleX(0.85);transform-origin:50% 50%;">00000002</div>
<div class="t" style="top:242.64px;font-size:10px;line-height:13px;letter-spacing:0.32px;color:#2e2e2e;left:708.00px;width:300px;text-align:center;transform:scaleX(0.85);transform-origin:50% 50%;">ALS 7 / 005</div>
<div class="t" style="top:253.84px;font-size:10px;line-height:13px;letter-spacing:0.32px;color:#2e2e2e;left:708.00px;width:300px;text-align:center;transform:scaleX(0.85);transform-origin:50% 50%;">00000017</div>
<div class="a" style="left:853px;top:35px;width:16px;height:12px;background:#4f81bd"></div>
<div class="t" style="top:35.03px;font-size:10px;line-height:13px;letter-spacing:0.32px;color:#2e2e2e;left:872.00px;transform:scaleX(0.85);transform-origin:0 50%;">Kosten</div>
<div class="frame"></div></div>
<div class="panel" id="p5" style="left:920px;top:281px;width:326px;height:272px">
<div class="hdr"><div class="title" style="">Kosten pro Anlagen (Top 10)</div><svg class="ico" style="left:306px" viewBox="0 0 14 14"><path d="M3.8 1.8H9.7L12.2 4.3V11.9H3.8Z" fill="#fff" stroke="#4a4a4a" stroke-width="1.7" stroke-linejoin="miter"/><path d="M1.3 10.8C2.8 9.6 4.5 8.9 7.4 8.2" fill="none" stroke="#777" stroke-width="1.4"/><path d="M10.3 5.2L6.0 6.6L8.7 9.9Z" fill="#3a3a3a"/></svg></div>
<div class="t" style="top:54.79px;font-size:13.6px;line-height:18px;color:#464950;left:12.50px;width:300px;text-align:center;transform:scaleX(1);transform-origin:50% 50%;">Gesamtkosten (Sum)</div>
<svg style="left:0;top:0" width="326" height="272"><path d="M162.5 150.60000000000002 L219.50 150.60 A57 57 0 0 1 218.14 162.97Z" fill="#f47920" stroke="#e8e8e8" stroke-width="0.6"/><path d="M162.5 150.60000000000002 L218.14 162.97 A57 57 0 0 1 207.89 185.08Z" fill="#3ea4c4" stroke="#e8e8e8" stroke-width="0.6"/><path d="M162.5 150.60000000000002 L207.89 185.08 A57 57 0 0 1 182.08 204.13Z" fill="#7a5ba0" stroke="#e8e8e8" stroke-width="0.6"/><path d="M162.5 150.60000000000002 L182.08 204.13 A57 57 0 0 1 105.59 153.71Z" fill="#8fb24a" stroke="#e8e8e8" stroke-width="0.6"/><path d="M162.5 150.60000000000002 L105.59 153.71 A57 57 0 1 1 219.50 150.60Z" fill="#b5403b" stroke="#e8e8e8" stroke-width="0.6"/><path d="M161.5999999999999 91.39999999999998 V94.5" stroke="#b5403b"/><path d="M219.5 156.5 L229 157" stroke="#f47920"/><path d="M213 178 L222.5999999999999 183" stroke="#3ea4c4"/><path d="M192 199 L201.9000000000001 205" stroke="#7a5ba0"/><path d="M127 207 L132 200" stroke="#8fb24a"/></svg>
<div class="a" style="left:5.2000000000000455px;top:78.19999999999999px;width:156.39999999999986px;height:13.199999999999989px;border:1px solid #b0605c;background:#fff"></div>
<div class="t" style="top:79.23px;font-size:10px;line-height:13px;letter-spacing:0.32px;color:#9a4a48;left:-66.60px;width:300px;text-align:center;transform:scaleX(0.85);transform-origin:50% 50%;">00000008, Klimaanlage Halle1: 50,...</div>
<div class="a" style="left:228.79999999999995px;top:138.89999999999998px;width:91.90000000000009px;height:24.30000000000001px;border:1px solid #dc9a66;background:#fff"></div>
<div class="t" style="top:139.93px;font-size:10px;line-height:13px;letter-spacing:0.32px;color:#c97a3c;left:124.75px;width:300px;text-align:center;transform:scaleX(0.85);transform-origin:50% 50%;">6306, 6306 Arburg</div>
<div class="t" style="top:150.83px;font-size:10px;line-height:13px;letter-spacing:0.32px;color:#c97a3c;left:124.75px;width:300px;text-align:center;transform:scaleX(0.85);transform-origin:50% 50%;">Allrounder: 3,48 %</div>
<div class="a" style="left:222.5999999999999px;top:162.60000000000002px;width:96.60000000000014px;height:24.399999999999977px;border:1px solid #6caac2;background:#fff"></div>
<div class="t" style="top:163.64px;font-size:10px;line-height:13px;letter-spacing:0.32px;color:#4596b0;left:120.90px;width:300px;text-align:center;transform:scaleX(0.85);transform-origin:50% 50%;">00000001, Montage A</div>
<div class="t" style="top:174.53px;font-size:10px;line-height:13px;letter-spacing:0.32px;color:#4596b0;left:120.90px;width:300px;text-align:center;transform:scaleX(0.85);transform-origin:50% 50%;">Q7 HT&nbsp; : 6,86 %</div>
<div class="a" style="left:201.9000000000001px;top:187px;width:118.79999999999995px;height:24.19999999999999px;border:1px solid #8a80aa;background:#fff"></div>
<div class="t" style="top:188.03px;font-size:10px;line-height:13px;letter-spacing:0.32px;color:#65588a;left:111.30px;width:300px;text-align:center;transform:scaleX(0.85);transform-origin:50% 50%;">R01060001, Weber Slicer -</div>
<div class="t" style="top:198.93px;font-size:10px;line-height:13px;letter-spacing:0.32px;color:#65588a;left:111.30px;width:300px;text-align:center;transform:scaleX(0.85);transform-origin:50% 50%;">565: 9,08 %</div>
<div class="a" style="left:4.5px;top:187px;width:122.5px;height:24.19999999999999px;border:1px solid #9fac78;background:#fff"></div>
<div class="t" style="top:188.03px;font-size:10px;line-height:13px;letter-spacing:0.32px;color:#7a8a58;left:-84.25px;width:300px;text-align:center;transform:scaleX(0.85);transform-origin:50% 50%;">6307, 6307 ARBURG SGM:</div>
<div class="t" style="top:198.93px;font-size:10px;line-height:13px;letter-spacing:0.32px;color:#7a8a58;left:-84.25px;width:300px;text-align:center;transform:scaleX(0.85);transform-origin:50% 50%;">29,71 %</div>
<div class="frame"></div></div>
</body></html>
